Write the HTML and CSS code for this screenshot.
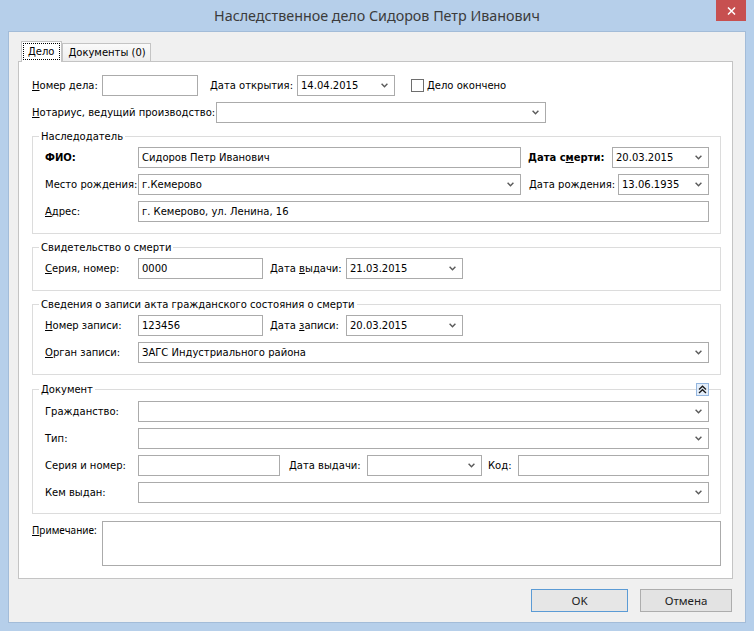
FILE: index.html
```html
<!DOCTYPE html>
<html lang="ru">
<head>
<meta charset="utf-8">
<title>Наследственное дело</title>
<link rel="stylesheet" href="styles.css">
</head>
<body>
<div class="window">
  <div class="titlebar">
    <span></span>
    <div class="title">Наследственное дело Сидоров Петр Иванович</div>
    <div class="close"><svg width="9" height="8" viewBox="0 0 9 8"><path d="M1 0.5 L8 7.5 M8 0.5 L1 7.5" stroke="#fff" stroke-width="1.5" fill="none"/></svg></div>
  </div>
  <div class="client">
    <div class="tabs">
      <div class="tab active"><span class="focus">Дело</span></div>
      <div class="tab">Документы (0)</div>
    </div>
    <div class="panel">
      <div class="row">
        <span class="lbl w70"><u>Н</u>омер дела:</span>
        <div class="input w96"></div>
        <span class="lbl ml12 w87"><u>Д</u>ата открытия:</span>
        <div class="combo w98"><span>14.04.2015</span><svg class="arr" width="7" height="5" viewBox="0 0 7 5"><path d="M0.6 0.8 L3.5 3.8 L6.4 0.8" fill="none" stroke="#5a5a5a" stroke-width="1.4"/></svg></div>
        <span class="check"><span class="box"></span>Дело окончено</span>
      </div>
      <div class="row">
        <span class="lbl w184"><u>Н</u>отариус, ведущий производство:</span>
        <div class="combo w330"><span></span><svg class="arr" width="7" height="5" viewBox="0 0 7 5"><path d="M0.6 0.8 L3.5 3.8 L6.4 0.8" fill="none" stroke="#5a5a5a" stroke-width="1.4"/></svg></div>
      </div>

      <div class="group">
        <div class="group-head"><span class="legend">Наследодатель</span></div>
        <div class="row">
          <span class="lbl w93 bold">ФИО:</span>
          <div class="input grow">Сидоров Петр Иванович</div>
          <span class="lbl ml7 w84 bold">Дата с<u>м</u>ерти:</span>
          <div class="combo w97"><span>20.03.2015</span><svg class="arr" width="7" height="5" viewBox="0 0 7 5"><path d="M0.6 0.8 L3.5 3.8 L6.4 0.8" fill="none" stroke="#5a5a5a" stroke-width="1.4"/></svg></div>
        </div>
        <div class="row">
          <span class="lbl w93">Место рождения:</span>
          <div class="combo grow"><span>г.Кемерово</span><svg class="arr" width="7" height="5" viewBox="0 0 7 5"><path d="M0.6 0.8 L3.5 3.8 L6.4 0.8" fill="none" stroke="#5a5a5a" stroke-width="1.4"/></svg></div>
          <span class="lbl ml8 w89">Дата рождения:</span>
          <div class="combo w91"><span>13.06.1935</span><svg class="arr" width="7" height="5" viewBox="0 0 7 5"><path d="M0.6 0.8 L3.5 3.8 L6.4 0.8" fill="none" stroke="#5a5a5a" stroke-width="1.4"/></svg></div>
        </div>
        <div class="row">
          <span class="lbl w93"><u>А</u>дрес:</span>
          <div class="input grow">г. Кемерово, ул. Ленина, 16</div>
        </div>
      </div>

      <div class="group">
        <div class="group-head"><span class="legend">Свидетельство о смерти</span></div>
        <div class="row">
          <span class="lbl w93"><u>С</u>ерия, номер:</span>
          <div class="input w125">0000</div>
          <span class="lbl ml7 w76">Дата <u>в</u>ыдачи:</span>
          <div class="combo w117"><span>21.03.2015</span><svg class="arr" width="7" height="5" viewBox="0 0 7 5"><path d="M0.6 0.8 L3.5 3.8 L6.4 0.8" fill="none" stroke="#5a5a5a" stroke-width="1.4"/></svg></div>
        </div>
      </div>

      <div class="group">
        <div class="group-head"><span class="legend">Сведения о записи акта гражданского состояния о смерти</span></div>
        <div class="row">
          <span class="lbl w93"><u>Н</u>омер записи:</span>
          <div class="input w125">123456</div>
          <span class="lbl ml7 w76">Дата <u>з</u>аписи:</span>
          <div class="combo w117"><span>20.03.2015</span><svg class="arr" width="7" height="5" viewBox="0 0 7 5"><path d="M0.6 0.8 L3.5 3.8 L6.4 0.8" fill="none" stroke="#5a5a5a" stroke-width="1.4"/></svg></div>
        </div>
        <div class="row">
          <span class="lbl w93"><u>О</u>рган записи:</span>
          <div class="combo grow"><span>ЗАГС Индустриального района</span><svg class="arr" width="7" height="5" viewBox="0 0 7 5"><path d="M0.6 0.8 L3.5 3.8 L6.4 0.8" fill="none" stroke="#5a5a5a" stroke-width="1.4"/></svg></div>
        </div>
      </div>

      <div class="group doc">
        <div class="group-head">
          <span class="legend">Документ</span>
          <span class="toggle"><svg width="9" height="9" viewBox="0 0 9 9"><path d="M1 4.5 L4.5 1.2 L8 4.5 M1 8 L4.5 4.7 L8 8" fill="none" stroke="#1a1a1a" stroke-width="1.3"/></svg></span>
        </div>
        <div class="row">
          <span class="lbl w93">Гражданство:</span>
          <div class="combo grow"><span></span><svg class="arr" width="7" height="5" viewBox="0 0 7 5"><path d="M0.6 0.8 L3.5 3.8 L6.4 0.8" fill="none" stroke="#5a5a5a" stroke-width="1.4"/></svg></div>
        </div>
        <div class="row">
          <span class="lbl w93">Тип:</span>
          <div class="combo grow"><span></span><svg class="arr" width="7" height="5" viewBox="0 0 7 5"><path d="M0.6 0.8 L3.5 3.8 L6.4 0.8" fill="none" stroke="#5a5a5a" stroke-width="1.4"/></svg></div>
        </div>
        <div class="row">
          <span class="lbl w93">Серия и номер:</span>
          <div class="input w142"></div>
          <span class="lbl ml9 w78">Дата выдачи:</span>
          <div class="combo w115"><span></span><svg class="arr" width="7" height="5" viewBox="0 0 7 5"><path d="M0.6 0.8 L3.5 3.8 L6.4 0.8" fill="none" stroke="#5a5a5a" stroke-width="1.4"/></svg></div>
          <span class="lbl ml6 w30">Код:</span>
          <div class="input grow"></div>
        </div>
        <div class="row">
          <span class="lbl w93">Кем выдан:</span>
          <div class="combo grow"><span></span><svg class="arr" width="7" height="5" viewBox="0 0 7 5"><path d="M0.6 0.8 L3.5 3.8 L6.4 0.8" fill="none" stroke="#5a5a5a" stroke-width="1.4"/></svg></div>
        </div>
      </div>

      <div class="note-row">
        <span class="note-lbl"><u>П</u>римечание:</span>
        <div class="textarea"></div>
      </div>
    </div>
    <div class="buttons">
      <div class="btn default">OK</div>
      <div class="btn cancel">Отмена</div>
    </div>
  </div>
</div>
</body>
</html>
```

FILE: styles.css
```css
* { box-sizing: border-box; }

body {
  margin: 0;
  width: 754px;
  height: 631px;
  overflow: hidden;
  background: #b6cfea;
  font-family: "DejaVu Sans", sans-serif;
  font-size: 10px;
  color: #000;
}

u { text-decoration: underline; text-underline-offset: 1px; }

.window {
  display: flex;
  flex-direction: column;
  height: 631px;
}

.titlebar {
  height: 31px;
  display: grid;
  grid-template-columns: 1fr auto 1fr;
  align-items: start;
}

.title {
  font-family: "Noto Sans", sans-serif;
  font-size: 14.3px;
  line-height: 31px;
  color: #3b3b3b;
  white-space: nowrap;
}

.close {
  justify-self: end;
  margin-right: 8px;
  width: 30px;
  height: 21px;
  background: #c75050;
  display: flex;
  align-items: center;
  justify-content: center;
}

.client {
  flex: 1;
  margin: 0 8px 8px;
  background: #f0f0f0;
  border: 1px solid #a3bcd8;
  padding: 9px 12px 10px 9px;
  display: flex;
  flex-direction: column;
}

.tabs {
  display: flex;
  align-items: flex-end;
  height: 20px;
  padding-left: 3px;
  position: relative;
  z-index: 1;
}

.tab {
  height: 18px;
  border: 1px solid #c4c4c4;
  border-bottom: none;
  padding: 0 4px 0 5px;
  line-height: 17px;
  background: linear-gradient(#fafafa, #ededed);
  white-space: nowrap;
}

.tab.active {
  height: 21px;
  margin-bottom: -1px;
  background: #fff;
  padding: 1px 1px 0 1px;
}

.focus {
  display: block;
  border: 1px dotted #000;
  padding: 0 5px 0 4px;
  line-height: 15px;
}

.panel {
  flex: 1;
  background: #fff;
  border: 1px solid #c4c4c4;
  padding: 13px 11px 11px 13px;
  display: flex;
  flex-direction: column;
}

.row {
  display: flex;
  align-items: center;
  height: 21px;
}

.row + .row { margin-top: 6px; }

.lbl { white-space: nowrap; flex: none; }
.bold { font-weight: bold; }

.input, .combo {
  height: 21px;
  border: 1px solid #ababab;
  background: #fff;
  display: flex;
  align-items: center;
  padding-left: 3px;
  white-space: nowrap;
  flex: none;
}

.combo {
  justify-content: space-between;
  padding-right: 6px;
}

.arr { flex: none; }

.grow { flex: 1; }

.w30 { width: 30px; }
.w70 { width: 70px; }
.w76 { width: 76px; }
.w78 { width: 78px; }
.w84 { width: 84px; }
.w87 { width: 87px; }
.w89 { width: 89px; }
.w91 { width: 91px; }
.w93 { width: 93px; }
.w96 { width: 96px; }
.w97 { width: 97px; }
.w98 { width: 98px; }
.w115 { width: 115px; }
.w117 { width: 117px; }
.w125 { width: 125px; }
.w142 { width: 142px; }
.w184 { width: 184px; }
.w330 { width: 330px; }

.ml6 { margin-left: 6px; }
.ml7 { margin-left: 7px; }
.ml8 { margin-left: 8px; }
.ml9 { margin-left: 9px; }
.ml12 { margin-left: 12px; }

.check {
  display: flex;
  align-items: center;
  margin-left: 16px;
  white-space: nowrap;
}

.box {
  width: 13px;
  height: 13px;
  border: 1px solid #6e6e6e;
  background: #fff;
  margin-right: 3px;
}

.group {
  border: 1px solid #dcdcdc;
  margin-top: 13px;
  padding: 0 11px 11px 12px;
}

.group.doc {
  margin-top: 14px;
  padding-bottom: 10px;
}

.group.doc .group-head { margin-bottom: 5px; }

.group-head {
  display: flex;
  justify-content: space-between;
  align-items: flex-start;
  height: 13px;
  margin-top: -7px;
  margin-bottom: 4px;
}

.legend {
  background: #fff;
  padding: 0 2px;
  margin-left: -6px;
  line-height: 13px;
  white-space: nowrap;
}

.toggle {
  width: 13px;
  height: 13px;
  border: 1px solid #94b6df;
  background: #e4eefa;
  display: flex;
  align-items: center;
  justify-content: center;
}

.note-row {
  display: flex;
  align-items: flex-start;
  margin-top: 7px;
}

.note-lbl {
  width: 70px;
  flex: none;
  font-family: "Noto Sans", sans-serif;
  font-size: 10px;
  padding-top: 2px;
  line-height: 14px;
}

.textarea {
  flex: 1;
  height: 45px;
  border: 1px solid #ababab;
  background: #fff;
}

.buttons {
  display: flex;
  justify-content: flex-end;
  gap: 12px;
  margin-top: 10px;
  margin-right: 1px;
}

.btn {
  height: 23px;
  display: flex;
  align-items: center;
  justify-content: center;
  font-family: "Noto Sans", sans-serif;
  font-size: 11.5px;
  color: #222;
  background: #e3e3e3;
  border: 1px solid #adadad;
}

.btn.default {
  width: 97px;
  border-color: #5b9bd5;
  background: #e6e6e6;
}

.btn.cancel { width: 92px; }
```
